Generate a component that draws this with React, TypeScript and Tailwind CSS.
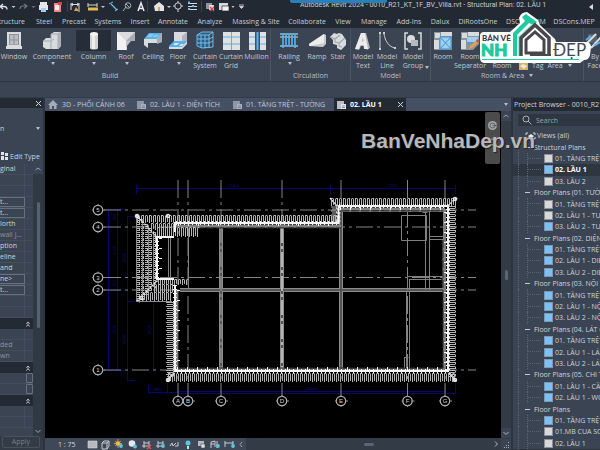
import type { ReactNode } from "react";

const L = "#d9dbdd";
const B = "#58b2ea";

/* ---------- small icons ---------- */

function Icon({ w = 20, h = 20, className = "", children }: { w?: number; h?: number; className?: string; children: ReactNode }) {
  return (
    <svg width={w} height={h} viewBox={`0 0 ${w} ${h}`} className={`shrink-0 ${className}`} fill="none" aria-hidden="true">
      {children}
    </svg>
  );
}

const WindowIcon = (
  <Icon>
    <path d="M3 1h14v14h1v3H2v-3h1z" fill={L} />
    <path d="M5 3h10v11H5z" fill="#8d939b" />
    <path d="M6 4h3.5v4.5H6zM10.500 4H14v4.500h-3.500zM6 9.500h3.500v4H6zM10.500 9.500H14v4h-3.500z" fill="#b9bdc2" />
  </Icon>
);
const ComponentIcon = (
  <Icon>
    <path d="M1 10l3-3h5V3l3-2h7v14l-3 3H4l-3-2z" fill={L} />
    <path d="M1 10h8v8M9 9V3h7l3-2M16 3v15M9 10l3-2" stroke="#a3a8ae" />
    <path d="M16 3l3-2v14l-3 3z" fill="#aeb2b7" />
  </Icon>
);
const ColumnIcon = (
  <Icon>
    <path d="M6 3v14c0 2 8 2 8 0V3z" fill="#cfd1d3" />
    <path d="M8 4v14h3V4z" fill="#eceded" />
    <ellipse cx="10" cy="3" rx="4" ry="2" fill="#f4f4f4" />
  </Icon>
);
const RoofIcon = (
  <Icon>
    <path d="M1 1h18v9h-8v9H1z" fill={L} />
    <path d="M1 1l9 9v9H1z" fill="#f1f1f1" />
    <path d="M10 10l9-9v9z" fill="#a9adb2" />
    <path d="M10 10l5 0-5 6z" fill="#bfc2c6" />
  </Icon>
);
const CeilingIcon = (
  <Icon>
    <path d="M1 8l5-6h13l-4 6z" fill={B} />
    <path d="M4 6l3-3h4L8 6zM11 4h5l-2 2h-4z" fill="#d5ecfa" />
    <path d="M1 8h13l5-6v9l-5 1H5v5l-4-3z" fill={L} />
    <path d="M14 8l5-6v9l-5 2z" fill="#a9adb2" />
    <path d="M3 7l4-4h10l-3 4z" fill={B} opacity=".6" />
  </Icon>
);
const FloorIcon = (
  <Icon>
    <path d="M6 1h13v9l-5 1H6z" fill={L} />
    <path d="M14 11V5l5-4v9z" fill="#b1b5ba" />
    <path d="M1 15l5-5h13l-5 7H1z" fill={B} />
    <path d="M5 14l2-2h4l-2 2zM11 15l2-2h3l-2 2z" fill="#d5ecfa" />
    <path d="M1 16h13l5-6v3l-5 5H1z" fill={L} />
  </Icon>
);
const CurtainSystemIcon = (
  <Icon>
    <path d="M2 4l5-3h11l-3 3v13l-7 1-5-3z" fill="#2f5d82" />
    <path d="M2 4h12v13M2 4v11l5 2 11-1V1H7L2 4M6 4v13M10 4v13M2 8h12l4-2M2 12h12l4-2M14 4l4-3" stroke="#7cc4f0" strokeWidth=".9" />
  </Icon>
);
const CurtainGridIcon = (
  <Icon>
    <path d="M2 1h17v18H2z" fill="#e1e1e0" />
    <path d="M10.500 1v18M2 6h17M2 13h17" stroke={B} strokeWidth="1" />
  </Icon>
);
const MullionIcon = (
  <Icon>
    <path d="M2 1h17v18H2z" fill="#e1e1e0" />
    <path d="M2 6h17M2 13h17" stroke={B} />
    <path d="M8 1h5v18H8z" fill="#38536c" />
    <path d="M9.500 1h2v18h-2z" fill={B} />
  </Icon>
);
const RailingIcon = (
  <Icon>
    <path d="M1 3h18M1 15h18" stroke="#7cc4f0" strokeWidth="1.500" />
    <path d="M1 6h18" stroke={L} />
    <path d="M4 4v13M7 4v11M10 4v11M13 4v11M16 4v13" stroke="#5eb4ea" strokeWidth="1.600" />
  </Icon>
);
const RampIcon = (
  <Icon>
    <path d="M2 13L17 3l2 1v9l-3 3-14-1z" fill="#c9cbcd" />
    <path d="M2 13L17 3v9L3 15z" fill="#ececec" />
  </Icon>
);
const StairIcon = (
  <Icon>
    <path d="M2 6l4-4 3 1 2-1 3 1 4 6v5l-5 5-4-2v-3l-4-1V9z" fill={L} />
    <path d="M2 6l5 2v3l4 1v3l3 1M7 8l5-4M11 12l6-5" stroke="#a3a8ae" strokeWidth="1.200" />
  </Icon>
);
const ModelTextIcon = (
  <Icon>
    <path d="M2 18L8 2h5l4 15-3 2-2-4H8l-2 4z" fill="#b3b6ba" />
    <path d="M2 18L8 2h4l3 16h-4l-.5-4H7.500L6 18zM8.500 10.500h2l-.5-4z" fill="#ececec" />
  </Icon>
);
const ModelLineIcon = (
  <Icon>
    <path d="M3 3v14" stroke="#cdd0d3" strokeWidth="1" />
    <path d="M7 3c1 7 5 13 11 14" stroke="#cdd0d3" />
    <path d="M2 1h2v2H2zM2 17h2v2H2zM6 1h2v2H6zM17 16h2v2h-2z" fill="#cdd0d3" />
  </Icon>
);
const ModelGroupIcon = (
  <Icon>
    <path d="M5 2H2v16h3M15 2h3v16h-3" stroke={L} strokeWidth="1.500" />
    <circle cx="8" cy="8" r="4" fill={L} />
    <path d="M8 9h7v6H8z" fill="#b6babf" />
  </Icon>
);
const RoomIcon = (
  <Icon>
    <path d="M1 1h18v18H1z" fill="#8e949c" />
    <path d="M2 2h5v5H2zM8 1h11v4H8zM1 9h5v9H1z" fill={L} />
    <path d="M7 6h11v12H7z" fill="#9ed0f0" />
    <path d="M7 6l11 12M18 6L7 18M7 6h11v12H7z" stroke="#3c94d0" />
  </Icon>
);
const RoomSepIcon = (
  <Icon>
    <path d="M1 1h18v12l-6 6H1z" fill="#8e949c" />
    <path d="M2 2h5v5H2zM8 1h11v4H8zM1 9h5v9H1z" fill={L} />
    <path d="M7 6h11v5H7z" fill="#9ed0f0" />
    <path d="M7 12h8" stroke="#4b9cd3" strokeWidth="1.500" />
    <path d="M9 18l1-3 7-6 2 2-7 6z" fill="#e6a04b" />
    <path d="M16 10l1-2 3 2-2 2z" fill="#c45050" />
  </Icon>
);
const ByFaceIcon = (
  <Icon>
    <path d="M3 3h9v9H3z" fill="#59616d" />
    <path d="M2 12l9-9M6 17l11-12" stroke={L} strokeWidth="2" />
    <path d="M1 9l5-4M9 15l6-4" stroke={B} strokeWidth="2" />
  </Icon>
);

function Caret({ className = "" }: { className?: string }) {
  return (
    <Icon w={5} h={3} className={className}>
      <path d="M1 0h4L3 3z" fill="#b9bfc9" />
    </Icon>
  );
}

function ViewIcon({ dark = false }: { dark?: boolean }) {
  return (
    <Icon w={9} h={9}>
      <path d="M0 1h7v3H4v5H0z" fill={dark ? "#b9bfc8" : "#8f98a6"} />
      <path d="M4 4h5v5H4z" fill={dark ? "#e3e5e8" : "#a9b0bb"} />
      <path d="M5 6h3M5 7.500h3" stroke={dark ? "#6d7480" : "#737c8a"} strokeWidth=".7" />
    </Icon>
  );
}

function HouseIcon({ color = "#a3abb6" }: { color?: string }) {
  return (
    <Icon w={10} h={10}>
      <path d="M0 5l5-5 5 5H8.500v4h-7V5z" fill={color} />
      <path d="M4 6h2v3H4z" fill="#4a5364" />
    </Icon>
  );
}

function CloseIcon() {
  return (
    <Icon w={7} h={7}>
      <path d="M1 1l5 5M6 1L1 6" stroke="#d6dae0" strokeWidth="1" />
    </Icon>
  );
}

/* ---------- title bar ---------- */

function QuickAccess() {
  return (
    <svg width="246" height="13" viewBox="0 0 246 13" fill="none" className="shrink-0" role="img" aria-label="Quick access toolbar">
      <path d="M0 6.500h4c2 0 3 1.500 3 3M3 4L0 6.500 3 9" stroke="#e3e5e8" strokeWidth="1.300" />
      <path d="M11.500 6h4l-2 2zM101 6h4l-2 2zM167 6h4l-2 2z" fill="#c3c8cf" />
      <path d="M20 9c0-2 1-3 3-3h3M24 4l3 2-3 2.500" stroke="#6b7482" strokeWidth="1.200" />
      <path d="M31.500 6h4l-2 2z" fill="#6b7482" />
      <path d="M40 2h7v3h-7zM39 5h9v5h-9z" fill="#e5e7ea" />
      <path d="M41 8h5v4h-5z" fill="#9fd0f1" />
      <path d="M54 3h7v9h-7z" fill="#e98a86" />
      <path d="M55 5h4v5h-4z" fill="#f7eceb" />
      <path d="M58 2h4v3h-4z" fill="#d24545" />
      <path d="M67.500 1v11M147.500 1v11M201.500 1v11" stroke="#3c4552" />
      <path d="M71 3v7M79 3v9M71 4.500h8M73 3l-2 1.500L73 6M77 3l2 1.500L77 6" stroke="#d5d8dc" />
      <path d="M76 7l3 4h-5z" fill="#d9a640" />
      <path d="M88 3v4M97 3v4M88 5h9" stroke="#d5d8dc" />
      <path d="M88 7.500h10v3H88z" fill="#e3bb55" />
      <path d="M111 4l6 6" stroke="#6fbced" strokeWidth="1.200" />
      <path d="M109 4l4-2M115 11l3-2" stroke="#6fbced" />
      <circle cx="128" cy="5.500" r="2.800" stroke="#aab0b9" />
      <path d="M126 7l-3 4M126 4l4 4" stroke="#aab0b9" />
      <path d="M138 11l3-8 3 8M139 8.500h4" stroke="#e8eaec" strokeWidth="1.500" />
      <path d="M154 6l5-4 5 4v5h-9z" fill="#e3e5e8" />
      <path d="M158 7h2v4h-2z" fill="#d9a640" />
      <circle cx="178" cy="6" r="3.200" stroke="#ccd0d6" />
      <path d="M178 1v2M178 9v3M173 6h2M181 6h2" stroke="#ccd0d6" />
      <path d="M188 3.500h9M188 6.500h9M188 9.500h9" stroke="#d5d8dc" />
      <path d="M188 2.500h2M192 6h2M188 9h2" stroke="#6fbced" strokeWidth="2" />
      <path d="M206 3h6v6h-6z" fill="#8e959f" />
      <path d="M209 5h5v5h-5z" fill="#d5d8dc" />
      <path d="M210 7l4 4M214 7l-4 4" stroke="#d64848" strokeWidth="1.300" />
      <path d="M219 3h9v3h-3v4h-6z" fill="#d5d8dc" />
      <path d="M222 6h7v5h-7z" fill="#f2f3f4" stroke="#222933" strokeWidth=".7" />
      <path d="M231.500 6h3l-1.500 2z" fill="#c3c8cf" />
      <path d="M239 5h5M239.500 6.500h4l-2 2z" fill="#d5d8dc" stroke="#d5d8dc" strokeWidth=".8" />
    </svg>
  );
}

const menuTabs: [string, string][] = [
  ["Steel", "w-[28px]"],
  ["Precast", "w-[32px]"],
  ["Systems", "w-[36px]"],
  ["Insert", "w-[28px]"],
  ["Annotate", "w-[38px]"],
  ["Analyze", "w-[36px]"],
  ["Massing & Site", "w-[56px]"],
  ["Collaborate", "w-[46px]"],
  ["View", "w-[26px]"],
  ["Manage", "w-[36px]"],
  ["Add-Ins", "w-[34px]"],
  ["Dalux", "w-[28px]"],
  ["DiRootsOne", "w-[48px]"],
  ["DSCons.BIM", "w-[48px]"],
  ["DSCons.MEP", "w-[48px]"],
];

/* ---------- ribbon ---------- */

type Tool = { icon: ReactNode; label: string; second?: string; w: string; caret?: boolean; active?: boolean };

function ToolButton({ icon, label, second, w, caret, active }: Tool) {
  return (
    <button className={`flex shrink-0 flex-col items-center whitespace-nowrap pt-[2px] ${w}`}>
      <span className={`flex h-[21px] w-full items-center justify-center ${active ? "bg-[#262d38]" : ""}`}>{icon}</span>
      <span className="mt-px min-h-[9px] leading-[9px]">{label}</span>
      {second && <span className="leading-[9px]">{second}</span>}
      {caret && <Caret className="mt-px" />}
    </button>
  );
}

function RibbonGroup({ tools, title, w, titleClass = "" }: { tools: Tool[]; title: string; w: string; titleClass?: string }) {
  return (
    <section className={`flex shrink-0 flex-col justify-between border-r border-[#4a5464] ${w}`}>
      <div className="flex">
        {tools.map((t) => (
          <ToolButton key={t.label + (t.second ?? "")} {...t} />
        ))}
      </div>
      <h2 className={`text-center leading-[11px] text-[#b9bfc9] ${titleClass}`}>{title}</h2>
    </section>
  );
}

const build: Tool[] = [
  { icon: WindowIcon, label: "Window", w: "w-[28px]" },
  { icon: ComponentIcon, label: "Component", w: "w-[48px]", caret: true },
  { icon: ColumnIcon, label: "Column", w: "w-[35px]", caret: true, active: true },
  { icon: RoofIcon, label: "Roof", w: "w-[30px]", caret: true },
  { icon: CeilingIcon, label: "Ceiling", w: "w-[24px]" },
  { icon: FloorIcon, label: "Floor", w: "w-[26px]", caret: true },
  { icon: CurtainSystemIcon, label: "Curtain", second: "System", w: "w-[28px]" },
  { icon: CurtainGridIcon, label: "Curtain", second: "Grid", w: "w-[24px]" },
  { icon: MullionIcon, label: "Mullion", w: "w-[27px]" },
];
const circulation: Tool[] = [
  { icon: RailingIcon, label: "Railing", w: "w-[36px]", caret: true },
  { icon: RampIcon, label: "Ramp", w: "w-[20px]" },
  { icon: StairIcon, label: "Stair", w: "w-[22px]" },
];
const model: Tool[] = [
  { icon: ModelTextIcon, label: "Model", second: "Text", w: "w-[24px]" },
  { icon: ModelLineIcon, label: "Model", second: "Line", w: "w-[24px]" },
  { icon: ModelGroupIcon, label: "Model", second: "Group", w: "w-[28px]" },
];
const room: Tool[] = [
  { icon: RoomIcon, label: "Room", w: "w-[24px]" },
  { icon: RoomSepIcon, label: "Room", second: "Separator", w: "w-[30px]" },
  { icon: null, label: "", second: "Room", w: "w-[34px]" },
];

function Ribbon() {
  return (
    <div className="flex h-[54px] shrink-0 overflow-hidden border-b border-[#2d3541] bg-[#3b4453] text-[#c3c8d0]">
      <RibbonGroup tools={build} title="Build" w="w-[271px]" titleClass="pr-[50px]" />
      <RibbonGroup tools={circulation} title="Circulation" w="w-[80px]" />
      <section className="flex w-[80px] shrink-0 flex-col justify-between border-r border-[#4a5464]">
        <div className="flex items-center">
          {model.map((t) => (
            <ToolButton key={t.second} {...t} />
          ))}
          <Caret className="-ml-[3px] mt-[36px]" />
        </div>
        <h2 className="text-center leading-[11px] text-[#b9bfc9]">Model</h2>
      </section>
      <section className="flex w-[153px] shrink-0 flex-col justify-between border-r border-[#4a5464]">
        <div className="flex">
          {room.map((t) => (
            <ToolButton key={t.label + t.second} {...t} />
          ))}
          <button className="flex items-center gap-[4px] self-end whitespace-nowrap leading-[9px]">
            <Icon w={9} h={8}>
              <path d="M0 0h9v8H0z" fill="#d9b26a" />
              <path d="M1 4l3-2 4 2-3 3z" fill="#f1e7d2" />
            </Icon>
            <span>Tag</span>
            <span>Area</span>
            <Caret />
          </button>
        </div>
        <h2 className="flex items-center justify-center gap-1 leading-[11px] text-[#b9bfc9]">
          Room &amp; Area <Caret />
        </h2>
      </section>
      <ToolButton icon={ByFaceIcon} label="By" second="Face" w="w-[22px]" />
    </div>
  );
}

/* ---------- properties palette ---------- */

type Prop = { kind?: "text" | "button" | "head" | "box" | "dim"; text?: string };
const props: Prop[] = [
  { text: "ginal" }, {}, {},
  { kind: "button", text: "t..." },
  { kind: "button", text: "t..." },
  { text: "lorth" },
  { kind: "dim", text: "wall j..." },
  { text: "ption" }, { text: "eline" }, { text: "and" },
  { kind: "button", text: "ne>" },
  { kind: "button", text: "t..." },
  {}, {},
  { kind: "head" },
  {}, { kind: "dim", text: "ded" }, { kind: "dim", text: "wn" },
  { kind: "head" },
  { kind: "box" }, { kind: "box" },
  { kind: "head" },
  {}, {},
];

function PropRow({ kind = "text", text }: Prop) {
  if (kind === "head")
    return (
      <div className="flex h-[11px] items-center justify-end bg-[#232a34] pr-[3px]">
        <Icon w={4} h={6}>
          <path d="M.5 3L2 1l1.500 2M.5 5.500L2 3.500l1.500 2" stroke="#d6dae0" strokeWidth=".9" />
        </Icon>
      </div>
    );
  return (
    <div className="flex h-[11px] items-center border-b border-[#434d5d]">
      {kind === "button" && <button className="h-[10px] w-[25px] border border-l-0 border-[#66717f] text-left leading-[8px]">{text}</button>}
      {kind === "box" && <button aria-label="Associate parameter" className="ml-auto h-[10px] w-[7px] rounded-[1px] border border-[#66717f]" />}
      {(kind === "text" || kind === "dim") && (
        <span className={`h-full w-[25px] whitespace-nowrap border-r border-[#434d5d] leading-[10px] ${kind === "dim" ? "text-[#8b94a1]" : ""}`}>{text}</span>
      )}
    </div>
  );
}

function Properties() {
  return (
    <aside className="flex w-[45px] shrink-0 flex-col border-r-2 border-[#2c343f] bg-[#3b4453] text-[#cdd2d9]">
      <div className="flex h-[10px] items-center justify-end bg-[#232a34] pr-[1px]">
        <button aria-label="Close properties"><CloseIcon /></button>
      </div>
      <button className="flex h-[41px] items-center justify-between pr-[3px]">
        <span>n</span>
        <Caret />
      </button>
      <button className="flex h-[14px] items-center gap-[2px] whitespace-nowrap">
        <Icon w={8} h={8}>
          <path d="M1 0h3v3H1zM5 1h3v3H5zM1 4h3v4H1zM5 5h3v3H5z" fill="#e3e5e8" />
        </Icon>
        Edit Type
      </button>
      <div className="flex min-h-0 flex-1 overflow-hidden pt-px">
        <div className="min-w-0 flex-1">
          {props.map((p, i) => (
            <PropRow key={i} {...p} />
          ))}
        </div>
        <div className="flex w-[10px] flex-col items-center bg-[#303843]">
          <Icon w={10} h={10} className="bg-[#3b4453]">
            <path d="M2.500 6L5 4l2.500 2" stroke="#9ba3af" />
          </Icon>
          <div className="mt-[28px] h-[126px] w-[3px] rounded bg-[#566173]" />
          <Icon w={10} h={10} className="mt-auto">
            <path d="M2.500 4L5 6.500 7.500 4" stroke="#9ba3af" />
          </Icon>
        </div>
      </div>
      <div className="flex h-[14px] justify-end bg-[#333b47] pr-[3px]">
        <button className="h-[12px] w-[38px] rounded-[2px] border border-[#48525f] leading-[10px] text-[#78818e]">Apply</button>
      </div>
    </aside>
  );
}

/* ---------- floor plan ---------- */

/* Vertical tile strokes filling a strip. */
function tilesX(x1: number, x2: number, y1: number, y2: number) {
  let d = "";
  let i = 0;
  for (let x = x1; x <= x2; x += 2) {
    const top = i % 3 === 0 ? y1 : y1 + 1;
    d += `M${x} ${top}V${y2 - (i % 2)}`;
    if (i % 2 === 0) d += `M${x} ${y1 + 0.5}h2`;
    i++;
  }
  return d;
}

/* Horizontal tile strokes filling a strip. */
function tilesY(y1: number, y2: number, x1: number, x2: number) {
  let d = "";
  let i = 0;
  for (let y = y1; y <= y2; y += 2) {
    d += `M${x1 + (i % 2)} ${y}H${i % 3 === 0 ? x2 : x2 - 1}`;
    if (i % 2 === 0) d += `M${x2 - 0.5} ${y}v2`;
    i++;
  }
  return d;
}

/* Courses of the large hip roof west of the bay. */
function hipRoof() {
  let d = "";
  for (let y = 218.5; y < 302; y += 2) {
    const inset = y < 238 ? y - 214 : y > 280 ? 304 - y : 22;
    for (let k = 0; k < 5; k++) {
      const x = 137 + k * 4;
      if (x < 136 + inset) {
        d += `M${x} ${y}h3`;
        if ((Math.floor(y) / 2 + k) % 3 < 1) d += `M${x + 2.5} ${y}v2`;
      }
    }
  }
  return d;
}

const gridX: [number, string][] = [[178, "A"], [188, "B"], [221, "C"], [282, "D"], [341, "E"], [407.5, "F"], [445, "G"]];
const gridY: [number, string][] = [[210, "5"], [227, "4"], [277.5, "3"], [290, "2"], [370, "1"]];

function Bubble({ x, y, t }: { x: number; y: number; t: string }) {
  return (
    <g>
      <circle cx={x} cy={y} r="4.700" stroke="#b5b5b5" strokeWidth="1.300" fill="#000" />
      <path d={`M${x - 6} ${y}h2M${x + 4} ${y}h3M${x} ${y - 6}v2M${x} ${y + 4}v2`} stroke="#8f8f8f" />
      <text x={x} y={y + 2} fontSize="6" textAnchor="middle" fill="#d2d2d2" className="font-['Liberation_Sans',sans-serif]">
        {t}
      </text>
    </g>
  );
}

function FloorPlan() {
  return (
    <svg viewBox="45 111 456 327" className="h-full w-full" fill="none" role="img" aria-label="Structural plan of level 1">
      {/* dimension lines */}
      <g stroke="#08086c">
        <path d="M136 188.500H456M136.500 185v9M330.500 185v9M455.500 185v9" />
        <path d="M108.500 209V370M117.500 209V370M127.500 216V381M104 209.500h20M104 370.500h20M127 216.500h8M127 301.500h8M127 380.500h8M104 277.500h18M104 290.500h18" />
        <path d="M153.500 302v67M148 392.500h30M148.500 385v9M167.500 383v11M177 391.500H445M178 393.500H456M455.500 383v10M445.500 383v11" />
      </g>
      <g fill="#0c0c98" fontSize="4" className="font-['Liberation_Sans',sans-serif]">
        <text x="228" y="187">17400</text>
        <text x="388" y="187">7200</text>
        <text x="153" y="391">1800</text>
        <text x="306" y="390">15600</text>
        <text x="116" y="334" transform="rotate(-90 116 334)">4500</text>
        <text x="126" y="344" transform="rotate(-90 126 344)">9600</text>
        <text x="116" y="255" transform="rotate(-90 116 255)">3100</text>
        <text x="126" y="262" transform="rotate(-90 126 262)">4900</text>
        <text x="151" y="334" transform="rotate(-90 151 334)">4500</text>
        <text x="116" y="220" transform="rotate(-90 116 220)">900</text>
        <text x="116" y="287" transform="rotate(-90 116 287)">700</text>
      </g>

      {/* reference grids */}
      <g stroke="#858585">
        {gridX.map(([x]) => (
          <path key={x} d={`M${x} 180V396`} strokeDasharray="18 4 3 4" />
        ))}
        {gridY.map(([y]) => (
          <path key={y} d={`M104 ${y}H476`} strokeDasharray="17 4 3 4" />
        ))}
      </g>

      {/* interior walls */}
      <g stroke="#8c8c8c" strokeWidth="4">
        <path d="M180 290H445" />
        <path d="M221 228V370M282 228V370M341 212V370" />
      </g>
      <g stroke="#555" strokeWidth="2">
        <path d="M180 290H445M221 228V370M282 228V370M341 212V370" />
      </g>
      <path d="M282 228V370" stroke="#b5b5b5" strokeWidth="2" strokeDasharray="15 3 3 3" />
      <path d="M221 228V370" stroke="#a5a5a5" strokeWidth="1" strokeDasharray="15 3 3 3" />
      <path d="M188.500 228V288M168.500 238V278M170.500 238V278" stroke="#808080" />

      {/* wet rooms and stair core */}
      <g stroke="#808080">
        <path d="M401.500 215.500h25v25h-25zM341 211.500h105M425.500 211v79M429.500 211v79M422.500 212.500h5" />
        <path d="M429 236.500h17M429 239.500h14v50M407 276.500h36M409.500 279.500h32M407.500 276v14M409.500 279v11M409.500 292V370M406.500 292V368M404.500 357.500h4M404.500 357v11" />
      </g>

      {/* exterior walls */}
      <g stroke="#808080" strokeWidth="3">
        <path d="M176 226H341M341 209H445M444.500 209V370M177 370H446M176.500 290V370" />
      </g>
      <path d="M176 228H341M341 211H443M177 368H443M178.500 292V368M443 240V368" stroke="#2e2e2e" strokeDasharray="8 2" />

      {/* eaves */}
      <g stroke="#b4b4b4" strokeWidth="1">
        <path d={tilesX(137.5, 341, 215, 223)} />
        <path d={tilesX(331.5, 456, 198, 206)} />
        <path d={tilesX(168.5, 455, 373, 382)} />
        <path d={tilesX(157.500, 198, 227, 237)} />
        <path d={tilesX(151.500, 174, 223, 230)} />
        <path d={tilesX(158.500, 187, 279, 285)} />
        <path d={tilesX(154.500, 174, 284, 293)} />
        <path d={tilesX(142.500, 172, 292, 301)} />
        <path d={tilesY(207, 222, 331, 337)} />
        <path d={tilesY(206.500, 378, 448, 456)} />
        <path d={tilesY(302.500, 378, 166, 174)} />
        <path d={hipRoof()} />
      </g>
      <g stroke="#8b8b8b">
        <path d="M136.500 215V302M142.500 219V298M148.500 225V292M153.500 231V287M136 301.500h36" />
      </g>
      <g stroke="#e4e4e4" strokeWidth="1.500">
        <path d="M136 215l21 22M137 301l21-21M330 198l8 9M456 198l-9 9M167 381l9-10M456 381l-9-10" strokeDasharray="2 1" />
        <circle cx="137" cy="216" r="1.500" />
        <circle cx="168" cy="216" r="1.500" />
        <circle cx="455" cy="199" r="1.500" />
        <circle cx="168" cy="380" r="1.500" />
        <circle cx="455" cy="380" r="1.500" />
        <circle cx="141" cy="298" r="1.500" />
      </g>

      {/* beam outline */}
      <path d="M174 279H157V237H174M175 223V232M175 285V371H448V206H338.500V223H174" stroke="#f4f4f4" strokeWidth="2" />
      <path d="M175 285V371H448V206H338.500V223H174M157 237V279" stroke="#f4f4f4" strokeWidth="4" strokeDasharray="1 3" />
      <path d="M177 368.500H445M178 224.500H338M340 208.500H445M178.500 290V368M445.500 212V368M160.500 238V278" stroke="#f4f4f4" strokeWidth="3" strokeDasharray="1 9" />

      {/* grid heads */}
      {gridY.map(([y, t]) => (
        <Bubble key={t} x={98} y={y} t={t} />
      ))}
      {gridX.map(([x, t]) => (
        <Bubble key={t} x={x} y={401} t={t} />
      ))}
    </svg>
  );
}

/* ---------- view area ---------- */

function DocTab({ label, w, house, active }: { label: string; w: string; house?: boolean; active?: boolean }) {
  return (
    <button
      role="tab"
      aria-selected={!!active}
      className={`flex shrink-0 items-center gap-[4px] whitespace-nowrap pl-[3px] pr-[2px] ${w} ${active ? "bg-[#232a34] font-bold text-white" : "text-[#c5cad2]"}`}
    >
      {house ? <HouseIcon /> : <ViewIcon dark={active} />}
      {label}
      {active && (
        <span className="ml-auto">
          <CloseIcon />
        </span>
      )}
    </button>
  );
}

function StatusIcons() {
  return (
    <svg width="160" height="11" viewBox="0 0 160 11" fill="none" className="shrink-0" role="img" aria-label="View controls">
      <path d="M1 2h9v7H1z" fill="#b5b8bc" stroke="#d6d8db" strokeWidth=".6" />
      <path d="M15 4h5v6h-5zM15 4l2-2h5v5l-2 3M20 4l2-2" stroke="#c9cdd3" />
      <circle cx="31" cy="4.500" r="2.200" fill="#f0b94d" />
      <path d="M31 0v9M27 4.500h8M28 2l6 5M34 2l-6 5" stroke="#f0b94d" strokeWidth=".7" />
      <circle cx="34" cy="7" r="1.900" fill="#5cc7dc" />
      <circle cx="45" cy="4.500" r="3.300" fill="#e8e9ea" />
      <circle cx="48" cy="7.500" r="1.900" fill="#5cc7dc" />
      <path d="M57 2v7M55 7h8M62 2v4M57 4h5" stroke="#c9cdd3" />
      <path d="M60 6l4 4M64 6l-4 4" stroke="#e05656" strokeWidth="1.300" />
      <path d="M71 2v7M69 7h6M76 2v4M71 4h5" stroke="#c9cdd3" />
      <circle cx="76" cy="7" r="1.900" fill="#5cc7dc" />
      <path d="M83 7l2-3 1 3 3-3M88 7h3V3" stroke="#c9cdd3" />
      <circle cx="101" cy="4" r="2.500" fill="#5cc7dc" />
      <path d="M100 7h2v3h-2z" fill="#b9e7f0" />
      <path d="M111 2h6v5h-6z" fill="#b5b8bc" />
      <path d="M114 5h4v4h-4z" fill="#e3e5e8" stroke="#3b4453" strokeWidth=".6" />
      <path d="M124 9V3l4-1v6M124 5h4M130 9V2" stroke="#c9cdd3" />
      <path d="M127 3l2 3" stroke="#e05656" />
      <circle cx="131" cy="7" r="1.900" fill="#5cc7dc" />
      <path d="M138 2v6M138 4h8M146 2v6" stroke="#c9cdd3" />
      <circle cx="146" cy="7" r="1.900" fill="#5cc7dc" />
      <path d="M155 3l-2 2.500 2 2.500" stroke="#9ba3af" />
    </svg>
  );
}

function ViewArea() {
  return (
    <main className="flex min-w-0 flex-1 flex-col">
      <div role="tablist" className="flex h-[13px] shrink-0 items-stretch bg-[#465064]">
        <DocTab label="3D - PHỐI CẢNH 06" w="w-[89px]" house />
        <DocTab label="02. LẦU 1 - DIỆN TÍCH" w="w-[96px]" />
        <DocTab label="01. TẦNG TRỆT - TƯỜNG" w="w-[104px]" />
        <DocTab label="02. LẦU 1" w="w-[72px]" active />
        <span className="ml-auto flex items-center pr-[3px]">
          <Caret />
        </span>
      </div>
      <div className="flex min-h-0 flex-1">
        <div className="relative min-w-0 flex-1 bg-black">
          <FloorPlan />
          <div className="absolute right-px top-px flex h-[52px] w-[15px] flex-col items-center rounded-[2px] bg-[#4b4b4b] pt-[8px]">
            <Icon w={11} h={11}>
              <circle cx="5.500" cy="5.500" r="4.500" fill="#a3a6a9" />
              <circle cx="5.500" cy="5.500" r="2.500" stroke="#5c5f62" />
              <path d="M5.500 5.500h5" stroke="#5c5f62" />
            </Icon>
            <Icon w={9} h={9} className="mt-[7px]">
              <circle cx="4" cy="4" r="3" stroke="#8fae74" />
              <path d="M6 6l2 2" stroke="#b9b9b9" />
            </Icon>
          </div>
        </div>
        <div className="flex w-[10px] shrink-0 flex-col items-center bg-[#333b47]">
          <Icon w={10} h={10} className="bg-[#3b4453]">
            <path d="M2.500 6L5 4l2.500 2" stroke="#9ba3af" />
          </Icon>
          <div className="mt-[149px] h-[10px] w-[3px] rounded bg-[#5a6576]" />
          <Icon w={10} h={10} className="mt-auto bg-[#3b4453]">
            <path d="M2.500 4L5 6.500 7.500 4" stroke="#b3bac4" />
          </Icon>
        </div>
      </div>
      <div className="flex h-[12px] shrink-0 items-center bg-[#333b47] text-[#d4d8de]">
        <div className="flex h-full w-[201px] shrink-0 items-center bg-[#3f4857]">
          <span className="w-[42px] shrink-0 pl-[13px]">1 : 75</span>
          <StatusIcons />
        </div>
        <div className="flex flex-1 justify-center">
          <div className="h-[3px] w-[10px] rounded bg-[#5a6576]" />
        </div>
        <Icon w={10} h={10}>
          <path d="M4 2.500L6.500 5 4 7.500" stroke="#b3bac4" />
        </Icon>
        <Icon w={10} h={10} className="bg-[#3b4453]">
          <path d="M7 3h1v1H7zM5 6h1v1H5zM7 6h1v1H7zM3 8h1v1H3zM5 8h1v1H5zM7 8h1v1H7z" fill="#9ba3af" />
        </Icon>
      </div>
    </main>
  );
}

/* ---------- project browser ---------- */

type Node = { t: string; k: "root" | "group" | "gray" | "blue"; on?: boolean };
const tree: Node[] = [
  { t: "Views (all)", k: "root" },
  { t: "Structural Plans", k: "group" },
  { t: "01. TẦNG TRỆT", k: "gray" },
  { t: "02. LẦU 1", k: "blue", on: true },
  { t: "03. LẦU 2", k: "gray" },
  { t: "Floor Plans (01. TƯỜNG)", k: "group" },
  { t: "01. TẦNG TRỆT", k: "gray" },
  { t: "02. LẦU 1 - TƯỜNG", k: "gray" },
  { t: "03. LẦU 2 - TƯỜNG", k: "blue" },
  { t: "Floor Plans (02. DIỆN TÍCH)", k: "group" },
  { t: "01. TẦNG TRỆT", k: "blue" },
  { t: "02. LẦU 1 - DIỆN TÍCH", k: "blue" },
  { t: "03. LẦU 2 - DIỆN TÍCH", k: "blue" },
  { t: "Floor Plans (03. NỘI THẤT)", k: "group" },
  { t: "01. TẦNG TRỆT", k: "blue" },
  { t: "02. LẦU 1 - NỘI THẤT", k: "blue" },
  { t: "03. LẦU 2 - NỘI THẤT", k: "blue" },
  { t: "Floor Plans (04. LÁT GẠCH)", k: "group" },
  { t: "01. TẦNG TRỆT", k: "blue" },
  { t: "02. LẦU 1 - LÁT GẠCH", k: "blue" },
  { t: "03. LẦU 2 - LÁT GẠCH", k: "blue" },
  { t: "Floor Plans (05. CHI TIẾT)", k: "group" },
  { t: "01. LẦU 1 - CẦU THANG", k: "blue" },
  { t: "02. LẦU 1 - WC", k: "blue" },
  { t: "Floor Plans", k: "group" },
  { t: "01. TẦNG TRỆT", k: "blue" },
  { t: "01.MB CUA SO", k: "gray" },
  { t: "02. LẦU 1", k: "gray" },
];

function TreeRow({ t, k, on }: Node) {
  const leaf = k === "gray" || k === "blue";
  return (
    <li className={`flex min-h-0 flex-1 items-center whitespace-nowrap leading-[9px] ${on ? "bg-[#2e3641] font-bold text-white" : ""}`}>
      {k === "root" && (
        <span className="flex w-[24px] shrink-0 justify-end pr-px">
          <Icon w={11} h={8}>
            <path d="M1 3V1h2M8 1h2v2M1 5v2h2M10 5v2H8" stroke="#d6dae0" />
            <path d="M3 4l3-2 3 2-3 3z" fill="#e3e5e8" />
          </Icon>
        </span>
      )}
      {k === "group" && (
        <span className="ml-[5px] flex h-full w-[16px] shrink-0 items-center border-l border-dotted border-[#5a6474] pl-[6px]">
          <span className="h-px w-[5px] bg-[#c5cad2]" />
        </span>
      )}
      {leaf && (
        <span className="ml-[5px] flex h-full w-[37px] shrink-0 items-center border-l border-dotted border-[#5a6474] pl-[8px]">
          <span className="h-full w-[17px] shrink-0 border-l border-dotted border-[#5a6474] pt-[5px]">
            <span className="block w-[13px] border-t border-dotted border-[#5a6474]" />
          </span>
          <span className={`size-[9px] shrink-0 border ${k === "blue" ? "border-[#7d99b1] bg-[#7cc1f5]" : "border-[#8b929c] bg-[#d8d8d6]"}`} />
        </span>
      )}
      <span>{t}</span>
    </li>
  );
}

function ProjectBrowser() {
  return (
    <aside className="flex w-[89px] shrink-0 flex-col overflow-hidden border-l-2 border-[#2c343f] bg-[#3b4453] text-[#d0d4db]">
      <h2 className="flex h-[13px] shrink-0 items-center whitespace-nowrap bg-[#232a34] pl-px">Project Browser - 0010_R21_</h2>
      <label className="ml-[5px] mt-[3px] flex h-[12px] shrink-0 items-center gap-[4px] bg-[#2e3641] pl-[4px]">
        <Icon w={10} h={10}>
          <circle cx="4" cy="4" r="3" stroke="#aab1bb" />
          <path d="M6 6l3.500 3.500" stroke="#aab1bb" />
        </Icon>
        <input aria-label="Search" placeholder="Search" className="w-full min-w-0 bg-transparent leading-[9px] outline-none placeholder:text-[#9aa2ae]" />
      </label>
      <ul className="mt-[4px] flex min-h-0 flex-1 flex-col border-b border-[#2c343f]">
        {tree.map((n, i) => (
          <TreeRow key={i} {...n} />
        ))}
      </ul>
    </aside>
  );
}

/* ---------- watermarks ---------- */

function Logo() {
  return (
    <svg width="116" height="54" viewBox="0 0 116 54" fill="none" role="img" aria-label="Bản Vẽ Nhà Đẹp">
      <path
        d="M7 21H33L43 12 42 7Q44 1 50 1L61 9 63 14 78 28 79 31H108Q114 31 114 36L113 44Q112 49 107 49L103 52H8Q3 52 3 47V25Q3 21 7 21z"
        fill="#fff"
      />
      {/* green half of the house */}
      <path d="M36 45V22L48 10 45 6 49 3 60 11 56 14 52 12 40 24V45z" fill="#20c9a0" />
      <path d="M42 45V26L56 13" stroke="#7fe0ca" strokeWidth="1.300" />
      {/* gray half of the house */}
      <path d="M44 45V27L58 14 72 27V45" stroke="#47474c" strokeWidth="3.500" />
      <path d="M49 43V29L58 21 67 29V42H48" stroke="#47474c" strokeWidth="3" />
      <path d="M53 44h21" stroke="#47474c" strokeWidth="2" />
      <path d="M5 48.500H102" stroke="#20c9a0" strokeWidth="1.200" />
      <g className="font-['Lato',sans-serif]">
        <text x="5" y="30" fontSize="8" fontWeight="900" fill="#3f4045">BẢN VẼ</text>
        <text x="4" y="45" fontSize="17" fontWeight="900" fill="#20c9a0" stroke="#20c9a0" strokeWidth="1">NH</text>
        <text x="76" y="45" fontSize="17" fill="#47484d">ĐẸP</text>
      </g>
    </svg>
  );
}

export default function App() {
  return (
    <div className="relative flex h-screen w-full flex-col overflow-hidden bg-[#3b4453] font-['Open_Sans','Noto_Sans',sans-serif] text-[7px] leading-[9px]">
      <header className="shrink-0 bg-[#222933] text-[#c9cdd4]">
        <div className="flex h-[14px] items-start overflow-hidden whitespace-nowrap">
          <QuickAccess />
          <h1 className="ml-[54px] pt-px font-['Roboto',sans-serif]">Autodesk Revit 2024 - 0010_R21_KT_1F_BV_Villa.rvt - Structural Plan: 02. LẦU 1</h1>
          <Icon w={4} h={6} className="ml-auto mr-[7px] mt-[4px]">
            <path d="M4 0v6L0 3z" fill="#d6dae0" />
          </Icon>
        </div>
        <nav className="flex h-[14px] items-center overflow-hidden whitespace-nowrap">
          <button className="flex w-[30px] shrink-0 justify-end pr-[5px]">Structure</button>
          {menuTabs.map(([t, w]) => (
            <button key={t} className={`flex shrink-0 justify-center ${w}`}>
              {t}
            </button>
          ))}
        </nav>
      </header>
      <Ribbon />
      <div className="h-[16px] shrink-0 border-b border-[#333b47]" />
      <div className="flex min-h-0 flex-1">
        <Properties />
        <ViewArea />
        <ProjectBrowser />
      </div>

      <div className="absolute left-[290px] top-0 h-[3px] w-[97px] rounded-b-[2px] bg-[#2b7fb8]" />
      <div className="absolute right-[7px] top-[11px]">
        <Logo />
      </div>
      <p className="absolute right-[65px] top-[129px] whitespace-nowrap font-['Liberation_Sans',Arial,sans-serif] text-[21px] font-bold leading-[24px] text-[#b8b8b8] [text-shadow:1px_1px_1px_#222]">
        BanVeNhaDep.vn
      </p>
    </div>
  );
}
